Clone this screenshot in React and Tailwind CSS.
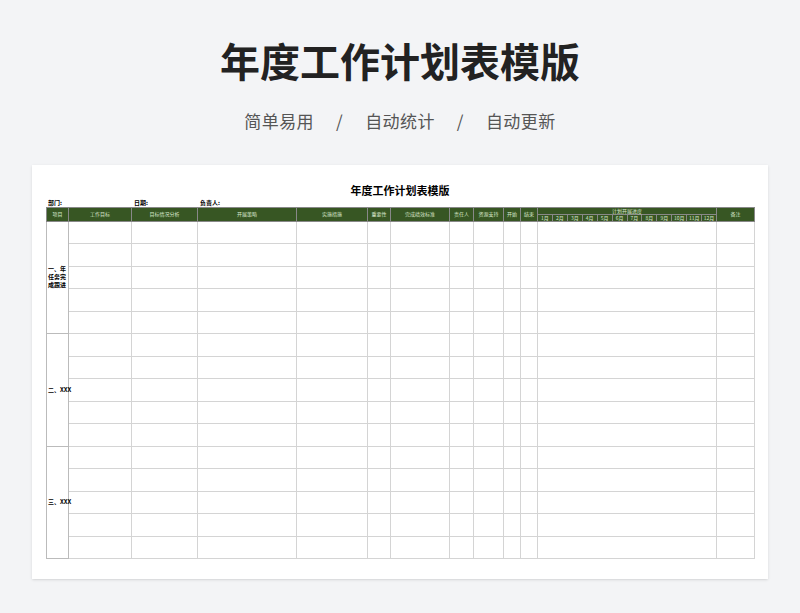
const cols = [22, 63, 66, 99, 71, 23, 59, 24, 30, 17, 17, 179, 38];
const heads = ["项目", "工作目标", "目标情况分析", "开展策略", "实施措施", "重要性", "完成绩效标准", "责任人", "资源支持", "开始", "结束"];
const months = ["1月", "2月", "3月", "4月", "5月", "6月", "7月", "8月", "9月", "10月", "11月", "12月"];
const groups = ["一、年任务完成跟进", "二、XXX", "三、XXX"];

export default function App() {
  return (
    <div className="w-[800px] h-[613px] bg-[#f3f4f6] flex flex-col items-center" style={{ fontFamily: '"Noto Sans CJK SC", sans-serif' }}>
      <h1 className="mt-[34px] text-[40px] leading-[52px] font-bold text-[#222]">年度工作计划表模版</h1>
      <div className="mt-[22px] text-[17px] text-[#555] flex gap-[22px] tracking-wide">
        <span>简单易用</span><span>/</span><span>自动统计</span><span>/</span><span>自动更新</span>
      </div>
      <div className="mt-[31px] w-[736px] h-[414px] bg-white shadow-sm px-[14px] pt-[18px]">
        <div className="text-center text-[11px] font-bold leading-[14px]" style={{ fontFamily: '"Noto Sans CJK SC", serif' }}>年度工作计划表模版</div>
        <div className="flex text-[6px] font-bold h-[10px] items-end pl-[2px]">
          <span className="w-[86px]">部门:</span><span className="w-[66px]">日期:</span><span>负责人:</span>
        </div>
        <table className="border-collapse table-fixed text-[5px] w-[708px]">
          <colgroup>{cols.map((w, i) => <col key={i} style={{ width: w }} />)}</colgroup>
          <thead className="bg-[#375623] text-[#d9e6cc]">
            <tr className="h-[7px]">
              {heads.map((h) => <th key={h} rowSpan={2} className="border border-[#888] font-normal">{h}</th>)}
              <th className="border border-[#888] font-normal leading-[6px]">计划开展进度</th>
              <th rowSpan={2} className="border border-[#888] font-normal">备注</th>
            </tr>
            <tr className="h-[7px]">
              <th className="border border-[#888] p-0 font-normal">
                <div className="flex">{months.map((m) => <span key={m} className="flex-1 border-r border-[#888] last:border-r-0 leading-[6px]">{m}</span>)}</div>
              </th>
            </tr>
          </thead>
          <tbody>
            {groups.flatMap((g, gi) =>
              [0, 1, 2, 3, 4].map((r) => (
                <tr key={gi * 5 + r} className="h-[22.5px]">
                  {r === 0 && <td rowSpan={5} className={"border border-[#bbb] text-[6px] font-bold leading-[8px] px-[1px]" + (gi > 0 ? " whitespace-nowrap" : "")}>{g}</td>}
                  {cols.slice(1).map((_, ci) => <td key={ci} className="border border-[#d4d4d4]" />)}
                </tr>
              ))
            )}
          </tbody>
        </table>
      </div>
    </div>
  );
}
